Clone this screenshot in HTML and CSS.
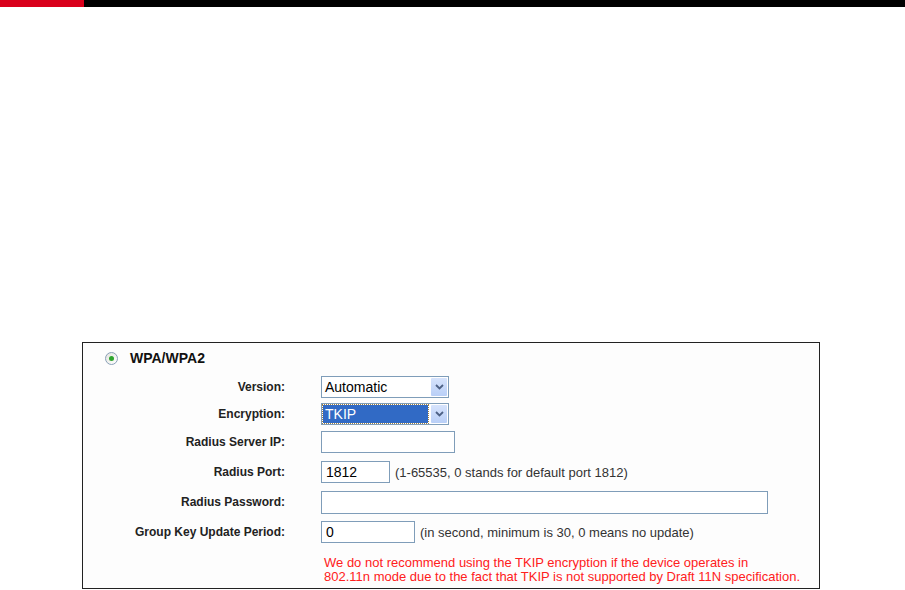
FILE: index.html
```html
<!DOCTYPE html>
<html lang="en">
<head>
    <meta charset="UTF-8">
    <title>Wireless Security</title>
    <link rel="stylesheet" href="styles.css">
</head>
<body>
    <div class="topbar">
        <div class="topbar-red"></div>
    </div>

    <div class="panel">
        <div class="radio-row">
            <span class="radio"><span class="radio-dot"></span></span>
            <span class="radio-label">WPA/WPA2</span>
        </div>

        <div class="row row-select">
            <div class="label">Version:</div>
            <div class="select">
                <span class="select-value">Automatic</span>
                <span class="select-btn">
                    <svg width="9" height="6" viewBox="0 0 9 6"><path d="M1 1 L4.5 4.5 L8 1" fill="none" stroke="#4d6185" stroke-width="1.8"/></svg>
                </span>
            </div>
        </div>

        <div class="row row-select">
            <div class="label">Encryption:</div>
            <div class="select">
                <span class="select-value selected">TKIP</span>
                <span class="select-btn">
                    <svg width="9" height="6" viewBox="0 0 9 6"><path d="M1 1 L4.5 4.5 L8 1" fill="none" stroke="#4d6185" stroke-width="1.8"/></svg>
                </span>
            </div>
        </div>

        <div class="row">
            <div class="label">Radius Server IP:</div>
            <input class="text-input w-ip" type="text" value="">
        </div>

        <div class="row">
            <div class="label">Radius Port:</div>
            <input class="text-input w-port" type="text" value="1812">
            <span class="hint">(1-65535, 0 stands for default port 1812)</span>
        </div>

        <div class="row">
            <div class="label">Radius Password:</div>
            <input class="text-input w-pass" type="text" value="">
        </div>

        <div class="row">
            <div class="label">Group Key Update Period:</div>
            <input class="text-input w-period" type="text" value="0">
            <span class="hint">(in second, minimum is 30, 0 means no update)</span>
        </div>

        <div class="warning">
            We do not recommend using the TKIP encryption if the device operates in<br>
            802.11n mode due to the fact that TKIP is not supported by Draft 11N specification.
        </div>
    </div>
</body>
</html>
```

FILE: styles.css
```css
body {
    margin: 0;
    background-color: #fff;
    font-family: "Liberation Sans", Arial, sans-serif;
    font-size: 12px;
    color: #222;
}
.topbar {
    height: 7px;
    background-color: #000;
}
.topbar-red {
    width: 84px;
    height: 7px;
    background-color: #d9001b;
}
.panel {
    margin: 335px 0 0 82px;
    width: 736px;
    border: 1px solid #222;
    padding: 8px 0 4px 0;
    background-color: #fdfdfd;
}
.radio-row {
    display: flex;
    align-items: center;
    height: 14px;
    padding-left: 22px;
    margin-bottom: 8px;
}
.radio {
    width: 11px;
    height: 11px;
    border: 1px solid #8aa0b8;
    border-radius: 50%;
    background: linear-gradient(135deg, #e4e4df, #fff);
    display: flex;
    align-items: center;
    justify-content: center;
}
.radio-dot {
    width: 5px;
    height: 5px;
    border-radius: 50%;
    background-color: #2ea52e;
}
.radio-label {
    margin-left: 12px;
    font-size: 14px;
    font-weight: bold;
    color: #111;
}
.row {
    display: flex;
    align-items: center;
    height: 30px;
}
.row-select {
    height: 27px;
}
.label {
    width: 202px;
    margin-right: 36px;
    text-align: right;
    font-weight: bold;
    color: #222;
}
.select {
    display: flex;
    align-items: center;
    width: 126px;
    height: 20px;
    border: 1px solid #7f9db9;
    background-color: #fff;
}
.select-value {
    flex: 1;
    height: 18px;
    line-height: 18px;
    margin-left: 1px;
    padding-left: 2px;
    font-size: 14px;
    color: #000;
}
.select-value.selected {
    background-color: #316ac5;
    color: #fff;
    outline: 1px dotted #a08040;
    margin-right: 3px;
}
.select-btn {
    width: 16px;
    height: 18px;
    margin-right: 1px;
    background: linear-gradient(#d6e3fc, #b9cff7);
    border-radius: 1px;
    display: flex;
    align-items: center;
    justify-content: center;
}
.text-input {
    box-sizing: border-box;
    height: 22px;
    border: 1px solid #7f9db9;
    padding: 0 4px;
    font-family: "Liberation Sans", Arial, sans-serif;
    font-size: 14px;
    color: #000;
    background-color: #fff;
    margin: 0;
}
.w-ip {
    width: 134px;
}
.w-port {
    width: 69px;
}
.w-pass {
    width: 447px;
    height: 23px;
}
.w-period {
    width: 94px;
}
.hint {
    margin-left: 5px;
    font-size: 13px;
    color: #333;
}
.warning {
    margin: 9px 0 0 241px;
    font-size: 13px;
    line-height: 14px;
    color: #ff2020;
}
```
